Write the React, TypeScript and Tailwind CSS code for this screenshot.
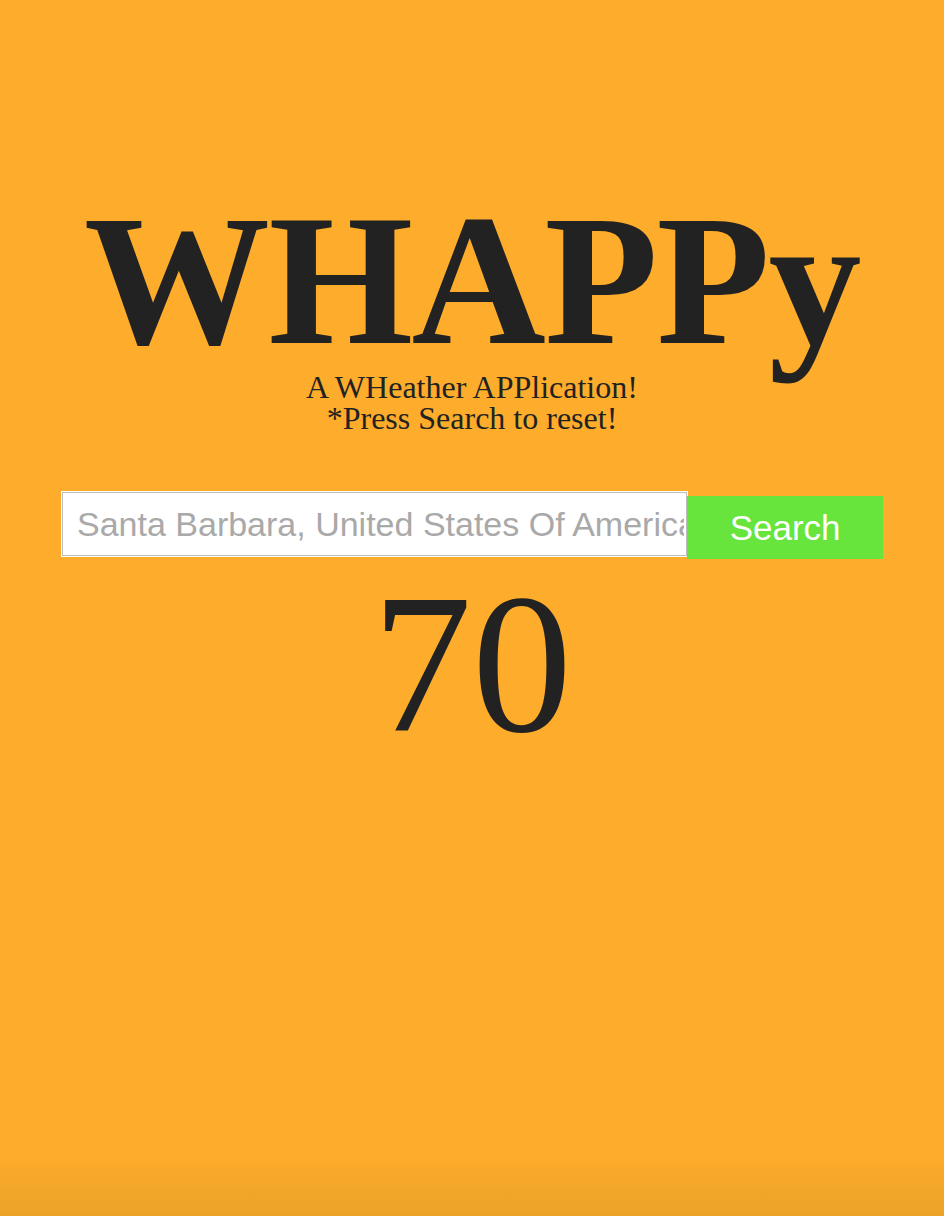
export default function App() {
  return (
    <div className="min-h-[1216px] w-full bg-[#fdac2b] flex flex-col items-center relative">
      <div className="h-[195px]" />
      <h1 className="text-[#222222] font-bold text-[186px] leading-[170px] tracking-[-1.5px] [font-family:'Liberation_Serif',serif]">
        WHAPPy
      </h1>
      <div className="text-[#222222] text-[32px] leading-[31px] text-center [font-family:'Liberation_Serif',serif] mt-[7px]">
        <div>A WHeather APPlication!</div>
        <div>*Press Search to reset!</div>
      </div>
      <div className="flex items-start mt-[58px] w-[822px] pl-[1px]">
        <input
          className="w-[626px] h-[64px] border border-[#bdbdbd] shadow-[0_0_0_1px_#ffffff] bg-white pl-[14px] pr-[2px] text-[34px] outline-none placeholder:text-[#a9a9a9] [font-family:'Liberation_Sans',sans-serif]"
          placeholder="Santa Barbara, United States Of America"
        />
        <button className="w-[196px] h-[63px] mt-[4px] bg-[#67e53c] text-white text-[35px] leading-none [font-family:'Liberation_Sans',sans-serif]">
          Search
        </button>
      </div>
      <div className="text-[#222222] text-[200px] leading-[200px] mt-[5px] [font-family:'Liberation_Serif',serif]">
        70
      </div>
      <div className="absolute left-0 right-0 bottom-0 h-[60px] bg-gradient-to-b from-[#fdac2b] to-[#eba227]" />
    </div>
  );
}
